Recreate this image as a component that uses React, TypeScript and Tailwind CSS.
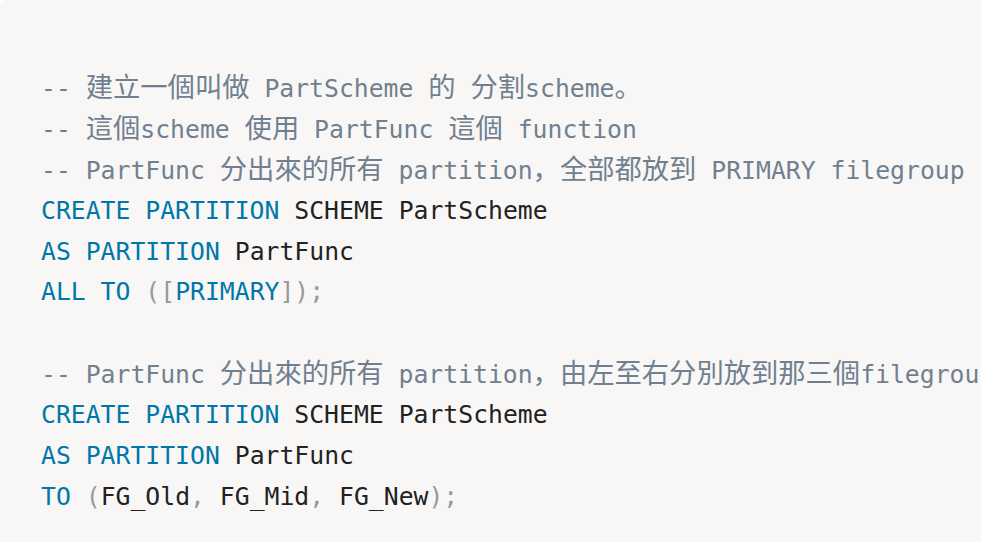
import React from "react";

type Tok = { t: string; c: "k" | "p" | "n" | "m" };

const CJK = /([\u3000-\u303f\u3400-\u9fff\uff00-\uffef]+)/;

function Run({ text }: { text: string }) {
  const parts = text.split(CJK);
  return (
    <>
      {parts.map((p, i) =>
        p === "" ? null : CJK.test(p) ? (
          <span key={i} className="text-[27.3px]">
            {p}
          </span>
        ) : (
          <span key={i}>{p}</span>
        )
      )}
    </>
  );
}

const cls: Record<Tok["c"], string> = {
  k: "text-[#0077aa]",
  p: "text-[#999999]",
  n: "text-[#222222]",
  m: "text-[#708090]",
};

const k = (t: string): Tok => ({ t, c: "k" });
const p = (t: string): Tok => ({ t, c: "p" });
const n = (t: string): Tok => ({ t, c: "n" });
const m = (t: string): Tok => ({ t, c: "m" });

const lines: Tok[][] = [
  [m("-- 建立一個叫做 PartScheme 的 分割scheme。")],
  [m("-- 這個scheme 使用 PartFunc 這個 function")],
  [m("-- PartFunc 分出來的所有 partition，全部都放到 PRIMARY filegroup")],
  [k("CREATE"), n(" "), k("PARTITION"), n(" SCHEME PartScheme")],
  [k("AS"), n(" "), k("PARTITION"), n(" PartFunc")],
  [k("ALL"), n(" "), k("TO"), n(" "), p("(["), k("PRIMARY"), p("]);")],
  [],
  [m("-- PartFunc 分出來的所有 partition，由左至右分別放到那三個filegroup")],
  [k("CREATE"), n(" "), k("PARTITION"), n(" SCHEME PartScheme")],
  [k("AS"), n(" "), k("PARTITION"), n(" PartFunc")],
  [k("TO"), n(" "), p("("), n("FG_Old"), p(","), n(" FG_Mid"), p(","), n(" FG_New"), p(");")],
];

export default function App() {
  return (
    <div className="w-[981px] h-[542px] bg-white overflow-hidden">
      <div
        className="w-[1100px] h-[560px] bg-[#f8f7f5] rounded-tl-[6px] pl-[41px] pt-[68px] text-[24.75px] leading-[40.9px] whitespace-pre"
        style={{ fontFamily: '"DejaVu Sans Mono", "Noto Sans CJK SC", monospace' }}
      >
        {lines.map((line, i) => (
          <div key={i} className="h-[40.9px]">
            {line.map((tok, j) => (
              <span key={j} className={cls[tok.c]}>
                <Run text={tok.t} />
              </span>
            ))}
          </div>
        ))}
      </div>
    </div>
  );
}
